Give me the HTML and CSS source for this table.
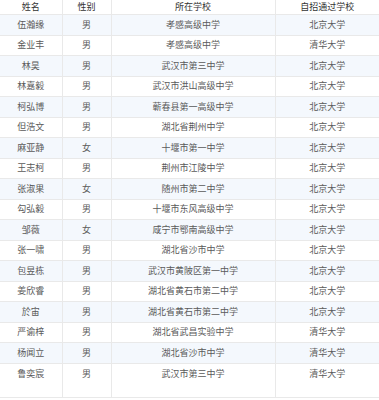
FILE: index.html
```html
<!DOCTYPE html>
<html lang="zh-CN">
<head>
<meta charset="utf-8">
<link rel="stylesheet" href="styles.css">
</head>
<body>
<table class="list">
  <colgroup>
    <col class="c-name"><col class="c-sex"><col class="c-school"><col class="c-uni">
  </colgroup>
  <thead>
    <tr><th>姓名</th><th>性别</th><th>所在学校</th><th>自招通过学校</th></tr>
  </thead>
  <tbody>
    <tr><td>伍瀚缘</td><td>男</td><td>孝感高级中学</td><td>北京大学</td></tr>
    <tr><td>金业丰</td><td>男</td><td>孝感高级中学</td><td>清华大学</td></tr>
    <tr><td>林昊</td><td>男</td><td>武汉市第三中学</td><td>北京大学</td></tr>
    <tr><td>林嘉毅</td><td>男</td><td>武汉市洪山高级中学</td><td>北京大学</td></tr>
    <tr><td>柯弘博</td><td>男</td><td>蕲春县第一高级中学</td><td>北京大学</td></tr>
    <tr><td>但浩文</td><td>男</td><td>湖北省荆州中学</td><td>北京大学</td></tr>
    <tr><td>麻亚静</td><td>女</td><td>十堰市第一中学</td><td>北京大学</td></tr>
    <tr><td>王志柯</td><td>男</td><td>荆州市江陵中学</td><td>北京大学</td></tr>
    <tr><td>张淑果</td><td>女</td><td>随州市第二中学</td><td>北京大学</td></tr>
    <tr><td>勾弘毅</td><td>男</td><td>十堰市东风高级中学</td><td>北京大学</td></tr>
    <tr><td>邹薇</td><td>女</td><td>咸宁市鄂南高级中学</td><td>北京大学</td></tr>
    <tr><td>张一啸</td><td>男</td><td>湖北省沙市中学</td><td>北京大学</td></tr>
    <tr><td>包昱栋</td><td>男</td><td>武汉市黄陂区第一中学</td><td>北京大学</td></tr>
    <tr><td>姜欣睿</td><td>男</td><td>湖北省黄石市第二中学</td><td>北京大学</td></tr>
    <tr><td>於宙</td><td>男</td><td>湖北省黄石市第二中学</td><td>北京大学</td></tr>
    <tr><td>严谕梓</td><td>男</td><td>湖北省武昌实验中学</td><td>清华大学</td></tr>
    <tr><td>杨闻立</td><td>男</td><td>湖北省沙市中学</td><td>清华大学</td></tr>
    <tr class="last"><td>鲁奕宸</td><td>男</td><td>武汉市第三中学</td><td>清华大学</td></tr>
  </tbody>
</table>
</body>
</html>
```
FILE: styles.css
```css
html, body {
  margin: 0;
  padding: 0;
  background: #fff;
}
.list {
  width: 379px;
  border-collapse: collapse;
  table-layout: fixed;
  font-family: "Noto Sans CJK SC", "Noto Sans", sans-serif;
  font-size: 9px;
  color: #5a5a5a;
}
.c-name { width: 62px; }
.c-sex { width: 49px; }
.c-school { width: 164px; }
.c-uni { width: 104px; }
.list th, .list td {
  padding: 0;
  text-align: center;
  border: 1px solid #e9e9e9;
  border-top: 0;
  line-height: 12px;
  white-space: nowrap;
}
.list th:first-child, .list td:first-child { border-left: 0; }
.list th:last-child, .list td:last-child { border-right: 0; }
.list th {
  height: 14px;
  color: #333;
  font-weight: normal;
  background: #fff;
}
.list td {
  height: 19.5px;
}
.list tbody tr:nth-child(odd) { background: #f4f8fd; }
.list tr.last td {
  height: 34px;
  vertical-align: top;
  padding-top: 4px;
  box-sizing: border-box;
}
```
